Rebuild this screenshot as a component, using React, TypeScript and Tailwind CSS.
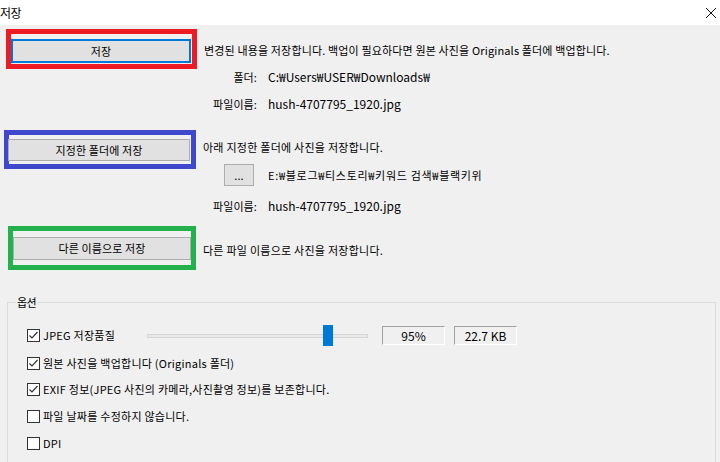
import React from 'react';

const font = { fontFamily: '"Noto Sans CJK KR", "Noto Sans", sans-serif' };

function WinButton({
    label,
    focused,
    className,
}: {
    label: string;
    focused?: boolean;
    className: string;
}) {
    return (
        <div
            className={`flex items-center justify-center bg-[#e1e1e1] text-[11px] tracking-[0.1px] text-black ${
                focused ? 'border-2 border-[#0078d7]' : 'border border-[#adadad]'
            } ${className}`}
        >
            {label}
        </div>
    );
}

function CheckBox({ checked, label }: { checked?: boolean; label: string }) {
    return (
        <div className="flex items-center gap-[3px]">
            <span className="flex h-[13px] w-[13px] items-center justify-center border border-[#333] bg-white">
                {checked && (
                    <svg width="11" height="11" viewBox="0 0 11 11">
                        <polyline
                            points="1.5,5.5 4,8 9.5,2"
                            fill="none"
                            stroke="#333"
                            strokeWidth="1.2"
                        />
                    </svg>
                )}
            </span>
            <span className="text-[11px] tracking-[0.25px]">{label}</span>
        </div>
    );
}

function InfoRow({ label, value, className }: { label: string; value: string; className: string }) {
    return (
        <div className={`flex h-[16px] items-center ${className}`}>
            <span className="w-[257px] text-right text-[11px] tracking-[0.1px]">{label}</span>
            <span className="ml-[11px] text-[12px] tracking-[0px]">{value}</span>
        </div>
    );
}

function ValueBox({ children }: { children: React.ReactNode }) {
    return (
        <div className="flex h-[19px] w-[63px] items-center justify-center border border-t-[#a0a0a0] border-l-[#a0a0a0] border-r-white border-b-white text-[12px]">
            {children}
        </div>
    );
}

export default function App() {
    return (
        <div className="flex h-[462px] w-[720px] flex-col overflow-hidden bg-[#f0f0f0] text-black" style={font}>
            <div className="flex h-[25px] shrink-0 items-center justify-between bg-white">
                <span className="text-[12px] tracking-[-0.5px]">저장</span>
                <svg width="12" height="12" viewBox="0 0 12 12" className="mr-[3px]">
                    <path d="M1 1 L11 11 M11 1 L1 11" stroke="#111" strokeWidth="1" />
                </svg>
            </div>

            <div className="flex flex-col">
                <div className="mt-[4px] flex items-center">
                    <div className="ml-[6px] h-[40px] w-[191px] border-[5px] border-[#ed1c24]">
                        <WinButton label="저장" focused className="mt-[5px] h-[24px] w-[180px]" />
                    </div>
                    <span className="ml-[7px] mt-[2px] text-[11px] tracking-[0.15px]">
                        변경된 내용을 저장합니다. 백업이 필요하다면 원본 사진을 Originals 폴더에 백업합니다.
                    </span>
                </div>
                <InfoRow label="폴더:" value="C:₩Users₩USER₩Downloads₩" className="mt-0" />
                <InfoRow label="파일이름:" value="hush-4707795_1920.jpg" className="mt-[11px]" />

                <div className="mt-[18px] flex items-center">
                    <div className="ml-[4px] h-[39px] w-[192px] border-[5px] border-[#3f48cc]">
                        <WinButton label="지정한 폴더에 저장" className="mt-[4px] -ml-px h-[22px] w-[182px]" />
                    </div>
                    <span className="mb-[4px] ml-[7px] text-[11px] tracking-[0.25px]">
                        아래 지정한 폴더에 사진을 저장합니다.
                    </span>
                </div>
                <div className="-mt-[5px] flex items-center">
                    <WinButton label="..." className="ml-[224px] h-[22px] w-[30px]" />
                    <span className="ml-[14px] text-[11px] tracking-[0.7px]">
                        E:₩블로그₩티스토리₩키워드 검색₩블랙키위
                    </span>
                </div>
                <InfoRow label="파일이름:" value="hush-4707795_1920.jpg" className="mt-[12px]" />

                <div className="mt-[12px] flex items-center">
                    <div className="ml-[8px] h-[44px] w-[188px] border-[5px] border-[#22b14c]">
                        <WinButton label="다른 이름으로 저장" className="mt-[6px] h-[23px] w-[178px]" />
                    </div>
                    <span className="ml-[7px] mt-[4px] text-[11px] tracking-[0.25px]">
                        다른 파일 이름으로 사진을 저장합니다.
                    </span>
                </div>

                <div className="relative ml-[7px] mt-[32px] h-[200px] w-[709px] border border-[#dcdcdc] pl-[19px]">
                    <span className="absolute -top-[9px] left-[8px] bg-[#f0f0f0] px-[1px] text-[11px] tracking-[-0.5px]">
                        옵션
                    </span>
                    <div className="mt-[22px] flex h-[21px] items-center">
                        <div className="w-[120px]">
                            <CheckBox checked label="JPEG 저장품질" />
                        </div>
                        <div className="relative h-[21px] w-[221px]">
                            <div className="absolute left-0 right-0 top-[9px] h-[4px] border border-[#d6d6d6] bg-[#e7eae7]" />
                            <div className="absolute left-[176px] top-0 h-[21px] w-[10px] bg-[#0078d7]" />
                        </div>
                        <div className="ml-[14px] flex gap-[9px]">
                            <ValueBox>95%</ValueBox>
                            <ValueBox>22.7 KB</ValueBox>
                        </div>
                    </div>
                    <div className="mt-[9px] flex h-[16px] items-center">
                        <CheckBox checked label="원본 사진을 백업합니다 (Originals 폴더)" />
                    </div>
                    <div className="mt-[10px] flex h-[16px] items-center">
                        <CheckBox checked label="EXIF 정보(JPEG 사진의 카메라,사진촬영 정보)를 보존합니다." />
                    </div>
                    <div className="mt-[11px] flex h-[16px] items-center">
                        <CheckBox label="파일 날짜를 수정하지 않습니다." />
                    </div>
                    <div className="mt-[11px] flex h-[16px] items-center">
                        <CheckBox label="DPI" />
                    </div>
                </div>
            </div>
        </div>
    );
}
